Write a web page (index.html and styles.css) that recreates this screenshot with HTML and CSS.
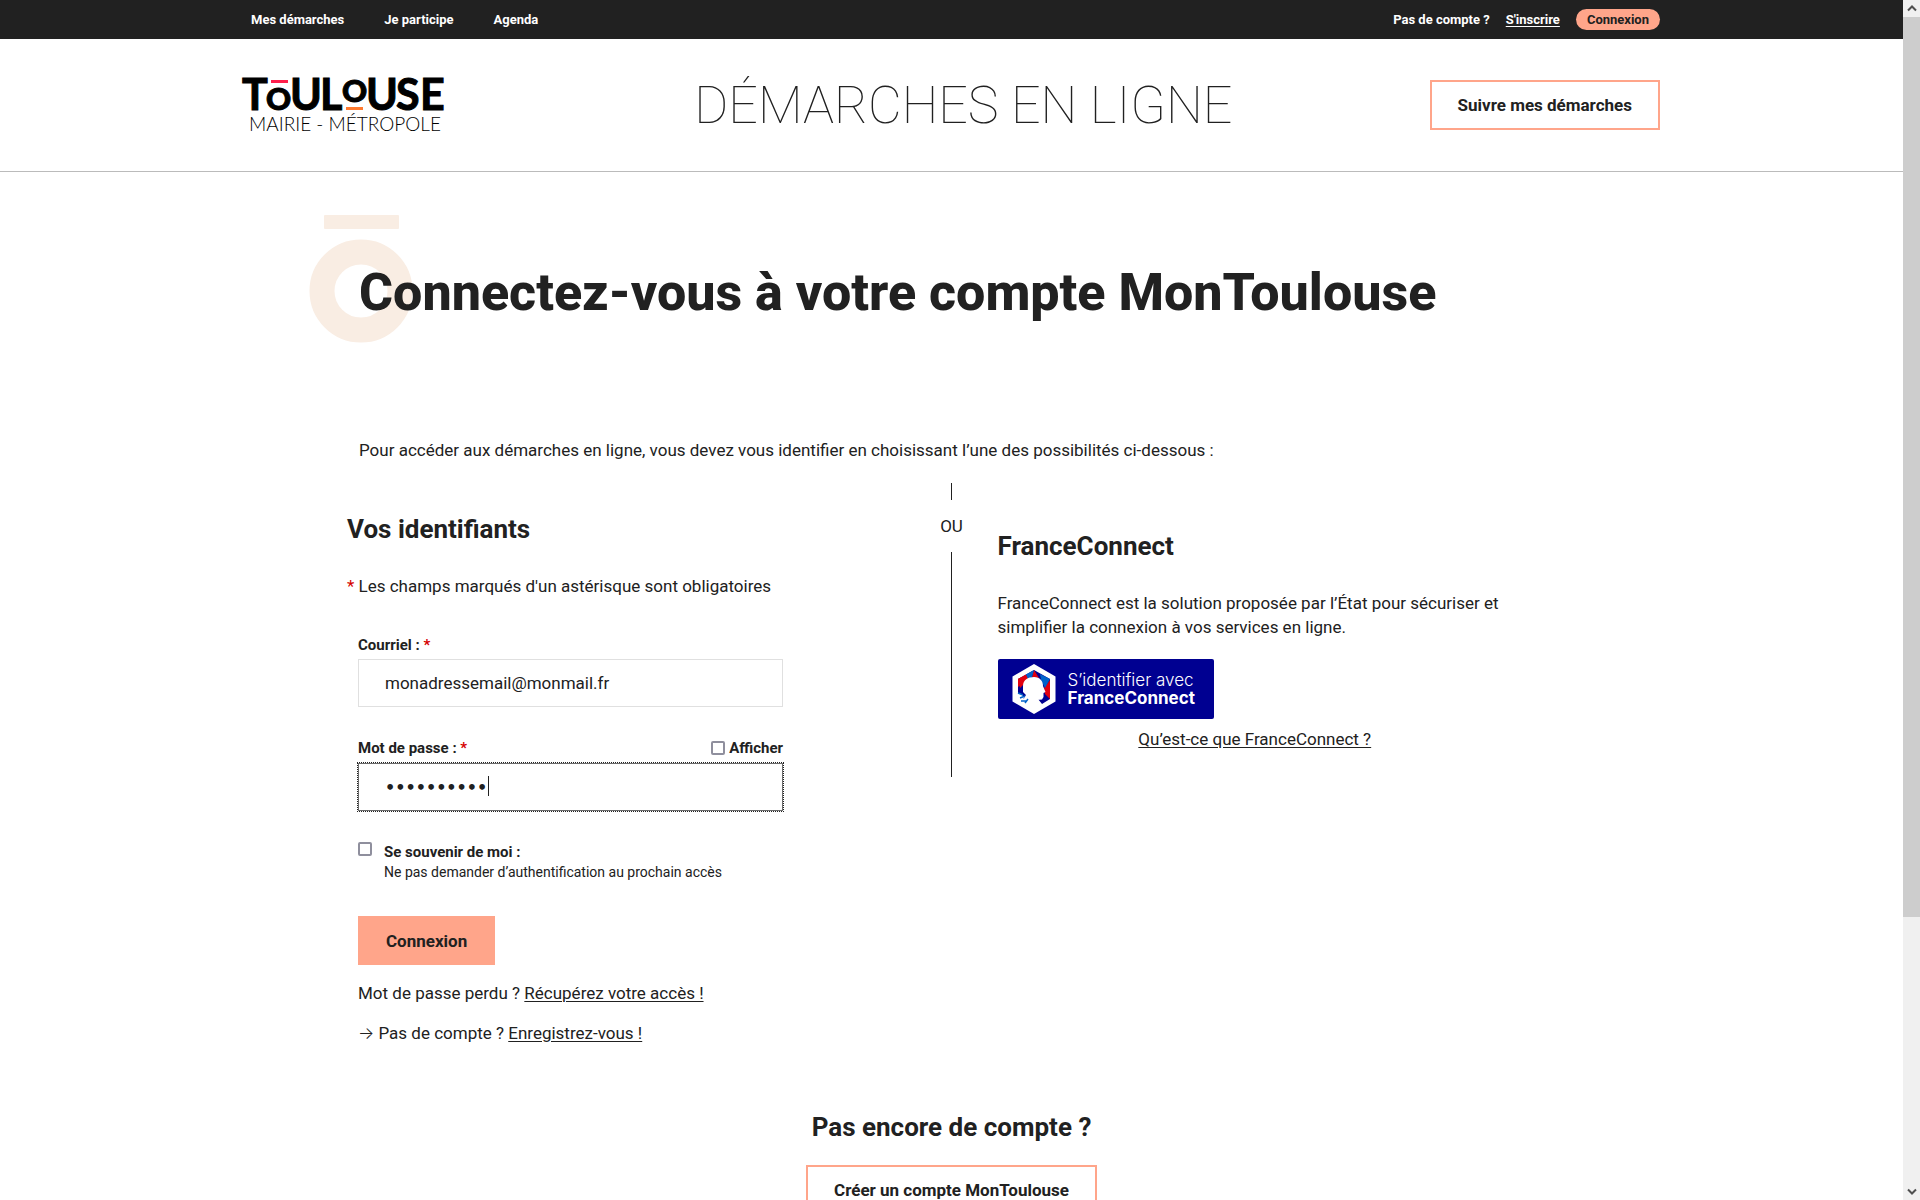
FILE: index.html
```html
<!DOCTYPE html>
<html lang="fr">
<head>
  <meta charset="utf-8">
  <meta name="viewport" content="width=device-width, initial-scale=1">
  <title>Démarches en ligne - Connexion</title>
  <link rel="stylesheet" href="styles.css">
</head>
<body>
  <div class="page">
    <div class="topbar">
      <div class="container topbar-inner">
        <nav class="topnav">
          <a href="#">Mes démarches</a>
          <a href="#">Je participe</a>
          <a href="#">Agenda</a>
        </nav>
        <div class="account">
          <span>Pas de compte ?</span>
          <a class="signup" href="#">S'inscrire</a>
          <a class="pill" href="#">Connexion</a>
        </div>
      </div>
    </div>

    <header class="header">
      <div class="container header-inner">
        <a class="logo" href="#" aria-label="Toulouse Mairie - Métropole">
          <svg width="202" height="56" viewBox="0 0 202 56">
            <g class="logo-name">
              <text x="-1" y="33">T</text>
              <text class="logo-o" x="23" y="33">O</text>
              <text x="47" y="33">U</text>
              <text x="77" y="33">L</text>
              <text class="logo-o" x="99" y="25">O</text>
              <text x="123" y="33">U</text>
              <text x="153" y="33">S</text>
              <text x="177" y="33">E</text>
            </g>
            <rect x="28" y="3" width="17" height="3" fill="#ff1f4b"/>
            <rect x="103" y="30" width="17" height="3" fill="#ff7a2f"/>
            <text class="logo-sub" x="6" y="54">MAIRIE - MÉTROPOLE</text>
          </svg>
        </a>
        <p class="site-title">DÉMARCHES EN LIGNE</p>
        <a class="btn btn-outline" href="#">Suivre mes démarches</a>
      </div>
    </header>

    <main class="main">
      <div class="title-block">
        <svg class="deco" width="104" height="130" viewBox="0 0 104 130" aria-hidden="true">
          <rect x="14" y="0" width="75" height="14" rx="1" fill="#f9ede3"/>
          <circle cx="51" cy="76" r="39" fill="none" stroke="#f9ede3" stroke-width="25"/>
        </svg>
        <h1>Connectez-vous à votre compte MonToulouse</h1>
      </div>
      <p class="intro">Pour accéder aux démarches en ligne, vous devez vous identifier en choisissant l’une des possibilités ci-dessous :</p>

      <div class="methods">
        <section class="credentials">
          <h2>Vos identifiants</h2>
          <p class="required-note"><span class="star">*</span> Les champs marqués d'un astérisque sont obligatoires</p>
          <form class="form">
            <div class="field">
              <label for="email">Courriel : <span class="star">*</span></label>
              <input class="input" id="email" type="email" value="monadressemail@monmail.fr">
            </div>
            <div class="field">
              <div class="label-row">
                <label for="password">Mot de passe : <span class="star">*</span></label>
                <label class="show"><input class="check" type="checkbox">Afficher</label>
              </div>
              <div class="password-box">
                <input class="input is-focused" id="password" type="password" value="motdepasse">
                <span class="caret"></span>
              </div>
            </div>
            <div class="remember">
              <input class="check" id="remember" type="checkbox">
              <div>
                <label for="remember">Se souvenir de moi :</label>
                <p class="hint">Ne pas demander d’authentification au prochain accès</p>
              </div>
            </div>
            <button class="btn btn-primary" type="button">Connexion</button>
            <p class="help">Mot de passe perdu ? <a href="#">Récupérez votre accès !</a></p>
            <p class="help"><span class="arrow">→</span> Pas de compte ? <a href="#">Enregistrez-vous !</a></p>
          </form>
        </section>

        <div class="separator">
          <span class="line line-short"></span>
          <span>OU</span>
          <span class="line line-long"></span>
        </div>

        <section class="franceconnect">
          <h2>FranceConnect</h2>
          <p>FranceConnect est la solution proposée par l’État pour sécuriser et simplifier la connexion à vos services en ligne.</p>
          <button class="fc-button" type="button">
            <svg width="44" height="50" viewBox="0 0 44 50" aria-hidden="true">
              <path fill="#fff" d="M22 0 43.500 12.500V37.500L22 50 .5 37.500V12.500Z"/>
              <path fill="#000091" d="M22 6 38 15V35L30 40 22 30 8 36 6 35V15Z"/>
              <path fill="#e1000f" d="M6 15 14 10.500 17 15 8 24ZM32 24 38 16V35L33 30ZM22 6 27 14 20 13Z"/>
              <path fill="#0063cb" d="M14 10.500 22 6 20 13 16 15ZM28 10 38 15 33 24 29 16Z"/>
              <path fill="#e1000f" d="M6 15 10 13 10 20 6 23Z"/>
              <path fill="#fff" d="M11 22C11 16 16 13 22 13 28 13 31 17 31 22L33.500 28 31.500 29 31.500 33 30 35.500 25 36 26 41 22 45 14 40 17 37 12 34 14 31 11 28Z"/>
              <path fill="#fff" d="M5 29 9 30 12 33 10 39 5 36Z"/>
              <path fill="none" stroke="#0063cb" stroke-width="1.500" d="M6 29 11 31M8 34 13 32M9 37 14 37M13 39 16 35"/>
            </svg>
            <span class="fc-label">S’identifier avec<strong>FranceConnect</strong></span>
          </button>
          <a class="fc-help" href="#">Qu’est-ce que FranceConnect ?</a>
        </section>
      </div>

      <section class="register">
        <h2>Pas encore de compte ?</h2>
        <a class="btn btn-outline" href="#">Créer un compte MonToulouse</a>
      </section>
    </main>
  </div>

  <div class="scrollbar" aria-hidden="true">
    <svg width="17" height="17" viewBox="0 0 17 17"><path d="M5 10.500 9 6.500 13 10.500" fill="none" stroke="#505050" stroke-width="2"/></svg>
    <div class="thumb"></div>
    <svg width="17" height="17" viewBox="0 0 17 17"><path d="M5 6.500 9 10.500 13 6.500" fill="none" stroke="#505050" stroke-width="2"/></svg>
  </div>
</body>
</html>
```

FILE: styles.css
```css
* {
  box-sizing: border-box;
}

body {
  display: flex;
  height: 100vh;
  margin: 0;
  overflow: hidden;
  background: #fff;
  color: #212121;
  font-family: Roboto, "Liberation Sans", sans-serif;
  font-size: 17px;
  line-height: 24px;
}

h1,
h2,
p {
  margin: 0;
}

a {
  color: inherit;
  text-underline-offset: 2px;
}

h2 {
  font-size: 26px;
  font-weight: 700;
  line-height: 32px;
}

.page {
  flex: 1;
  min-width: 0;
  overflow: hidden;
}

.container {
  max-width: 1417px;
  margin: 0 auto;
}

/* Top bar */

.topbar {
  background: #212121;
  color: #fff;
  font-size: 13px;
  font-weight: 700;
  line-height: 21px;
}

.topbar-inner {
  display: flex;
  align-items: center;
  justify-content: space-between;
  height: 39px;
  padding-left: 8px;
}

.topnav {
  display: flex;
  gap: 40px;
}

.topnav a {
  text-decoration: none;
}

.account {
  display: flex;
  gap: 16px;
}

.pill {
  padding: 0 11px;
  border-radius: 11px;
  background: #ffa58a;
  color: #212121;
  text-decoration: none;
}

/* Header */

.header {
  border-bottom: 1px solid #bbb;
}

.header-inner {
  display: flex;
  align-items: center;
  justify-content: space-between;
  height: 132px;
}

.logo {
  flex: 0 0 254px;
}

.logo svg {
  display: block;
  overflow: visible;
}

.logo-name {
  fill: #000;
  stroke: #000;
  stroke-width: 1px;
  font-family: Lato, sans-serif;
  font-size: 43px;
  font-weight: 700;
}

.logo-o {
  font-size: 31px;
  font-weight: 900;
}

.logo-sub {
  font-family: Lato, sans-serif;
  font-size: 19px;
  font-weight: 300;
}

.site-title {
  padding-top: 2px;
  font-size: 52px;
  font-weight: 100;
  line-height: 60px;
}

.btn {
  display: inline-block;
  padding: 11px 26px;
  border: 2px solid #ffa58a;
  color: #212121;
  font: inherit;
  font-weight: 700;
  text-decoration: none;
}

.btn-primary {
  padding-bottom: 10px;
  background: #ffa58a;
}

/* Main content */

.main {
  max-width: 1209px;
  margin: 0 auto;
  padding-top: 91px;
}

.title-block {
  position: relative;
  padding-left: 12px;
}

.title-block h1 {
  position: relative;
  font-size: 52px;
  font-weight: 800;
  line-height: 60px;
}

.deco {
  position: absolute;
  top: -48px;
  left: -37px;
  overflow: visible;
}

.intro {
  margin-top: 115px;
  padding-left: 12px;
}

.methods {
  display: grid;
  grid-template-columns: 1fr 24px 1fr;
  align-items: start;
  margin-top: 21px;
}

.credentials {
  padding-top: 30px;
}

.required-note {
  margin-top: 29px;
}

.star {
  color: #d50000;
}

.form {
  width: 436px;
  margin-top: 37px;
  padding-left: 11px;
}

.field {
  display: flex;
  flex-direction: column;
  gap: 4px;
  margin-bottom: 31px;
}

.form label {
  font-size: 15px;
  font-weight: 700;
  line-height: 20px;
}

.label-row {
  display: flex;
  align-items: flex-start;
  justify-content: space-between;
  height: 21px;
}

.show {
  display: flex;
  align-items: center;
  gap: 4px;
}

.input {
  display: block;
  width: 100%;
  height: 48px;
  padding: 0 26px;
  border: 1px solid #e0e0e0;
  background: #fff;
  color: #212121;
  font: inherit;
}

.input.is-focused {
  border-color: #6b6b6b;
  outline: 1px dotted #212121;
}

.input[type="password"] {
  font-family: "DejaVu Sans", sans-serif;
  font-size: 16px;
  font-weight: 700;
}

.password-box {
  position: relative;
}

.caret {
  position: absolute;
  top: 13px;
  left: 130px;
  width: 1px;
  height: 20px;
  background: #212121;
}

.check {
  flex: none;
  width: 14px;
  height: 14px;
  margin: 0;
  border: 2px solid #8f8f9d;
  border-radius: 2px;
  background: #fff;
  appearance: none;
}

.remember {
  display: flex;
  gap: 12px;
  margin-bottom: 34px;
}

.remember label {
  display: block;
}

.hint {
  font-size: 14px;
  line-height: 20px;
}

.help {
  margin-top: 16px;
}

.arrow {
  font-family: Inter, sans-serif;
  font-weight: 300;
}

.separator {
  display: flex;
  flex-direction: column;
  align-items: center;
  gap: 14px;
}

.line {
  width: 1px;
  background: #212121;
}

.line-short {
  height: 17px;
}

.line-long {
  height: 225px;
}

.franceconnect {
  padding: 47px 44px 0 34px;
}

.franceconnect p {
  margin: 29px 0 20px;
}

.fc-button {
  display: flex;
  align-items: center;
  gap: 12px;
  width: 216px;
  height: 60px;
  padding: 0 14px;
  border: 0;
  border-radius: 2px;
  background: #000091;
  color: #fff;
  font-family: Inter, sans-serif;
  font-size: 17px;
  font-weight: 300;
  line-height: 18px;
  text-align: left;
  white-space: nowrap;
}

.fc-button svg {
  flex: none;
}

.fc-label strong {
  display: block;
  font-weight: 700;
}

.fc-help {
  display: block;
  margin-top: 8px;
  text-align: center;
}

.register {
  display: flex;
  flex-direction: column;
  align-items: center;
  gap: 22px;
  margin-top: 66px;
}

/* Window scrollbar */

.scrollbar {
  display: flex;
  flex-direction: column;
  flex: none;
  width: 17px;
  background: #f0f0f0;
}

.thumb {
  height: 75%;
  margin-bottom: auto;
  background: #cdcdcd;
}
```
